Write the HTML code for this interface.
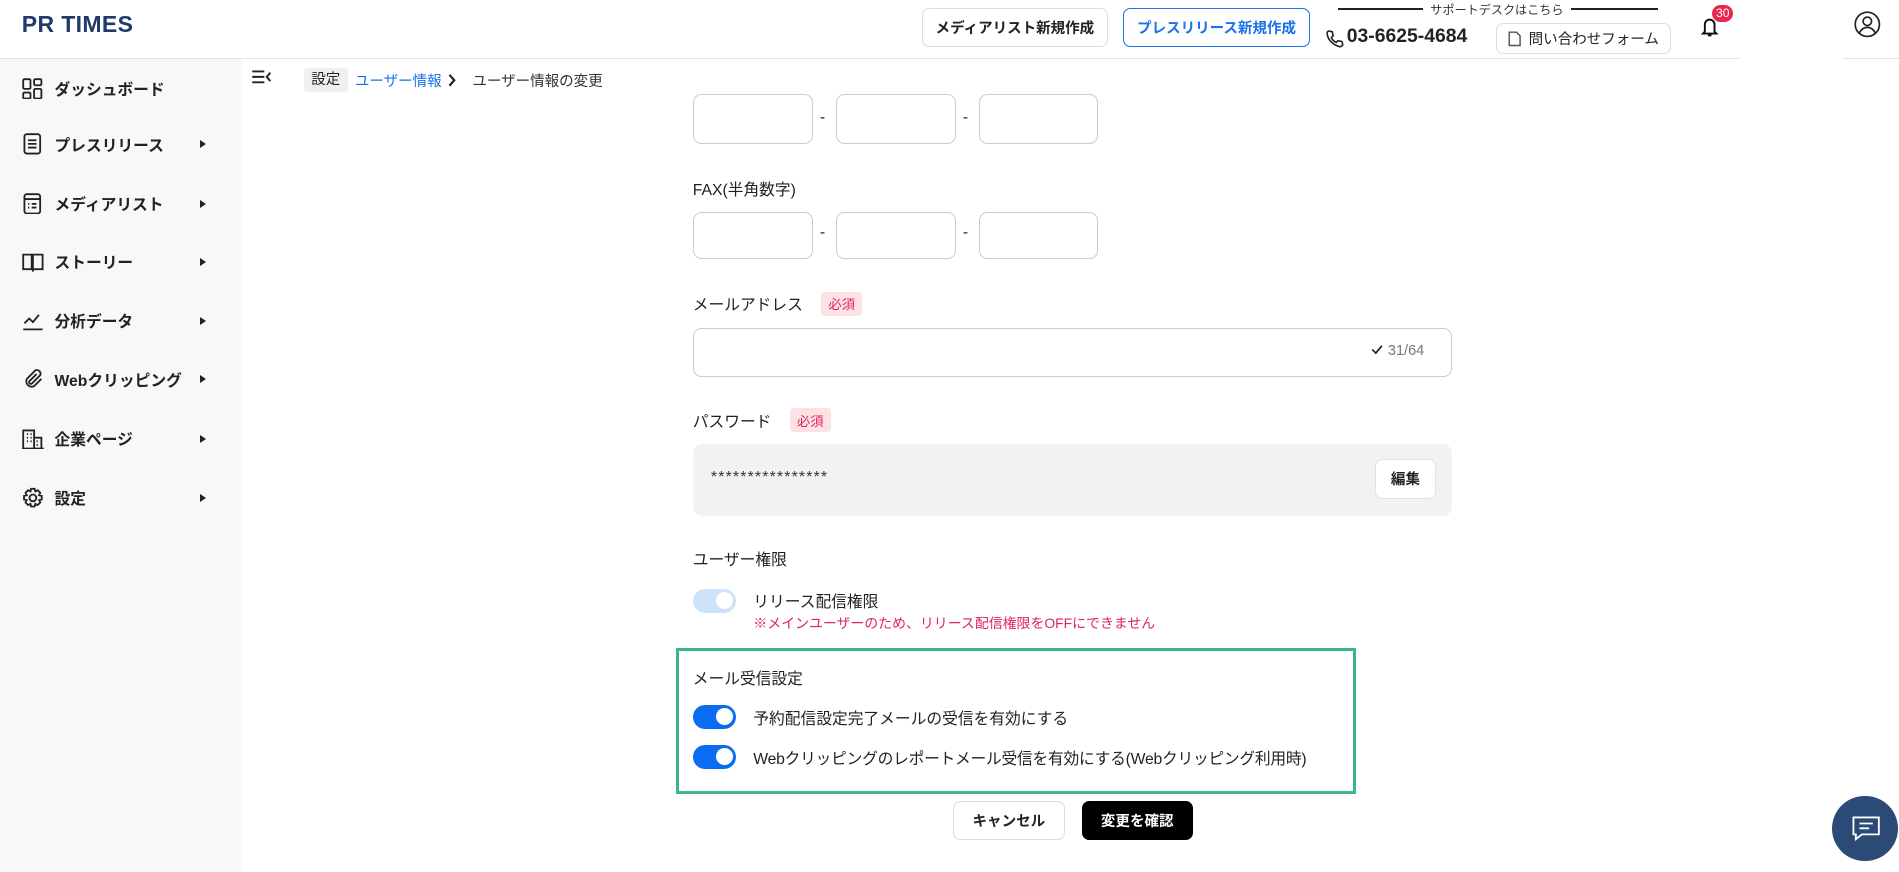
<!DOCTYPE html>
<html><head><meta charset="utf-8"><style>
html{zoom:1.21109}
*{box-sizing:border-box;margin:0;padding:0}
body{width:1568px;height:720px;overflow:hidden;background:#fff;font-family:"Liberation Sans","Noto Sans CJK JP",sans-serif;color:#222;position:relative}
.a{position:absolute}
.btn{position:absolute;border:1px solid #ddd;border-radius:6px;background:#fff;font-weight:bold;font-size:12px;display:flex;align-items:center;justify-content:center}
.nav{position:absolute;left:18px;width:160px;height:20px;display:flex;align-items:center;font-weight:bold;font-size:13px}
.nav svg{width:18px;height:18px;margin-right:9px}
.nav .ar{position:absolute;left:147px;top:7px;width:0;height:0;border-left:5px solid #222;border-top:4px solid transparent;border-bottom:4px solid transparent}
.inp{position:absolute;border:1px solid #ccc;border-radius:7px;background:#fff}
.lbl{position:absolute;font-size:13px;color:#222}
.req{position:absolute;background:#fde2e4;color:#e0245e;font-size:11px;border-radius:3px;padding:2px 6px}
.tg{position:absolute;width:36px;height:20px;border-radius:10px;background:#0a6cf0}
.tg::after{content:"";position:absolute;right:3px;top:3px;width:14px;height:14px;border-radius:50%;background:#fff}
.t{position:absolute;font-size:13px}
</style></head><body>
<!-- header -->
<div class="a" style="left:0;top:48px;width:1437px;height:1px;background:#e3e3e3"></div>
<div class="a" style="left:1522px;top:48px;width:46px;height:1px;background:#e3e3e3"></div>
<div class="a" style="left:18px;top:9px;font-size:19px;font-weight:bold;color:#1f3a6b;letter-spacing:0.3px">PR TIMES</div>
<div class="btn" style="left:761px;top:7px;width:154px;height:32px">メディアリスト新規作成</div>
<div class="btn" style="left:927px;top:7px;width:155px;height:32px;border-color:#1a73e8;color:#1a73e8">プレスリリース新規作成</div>
<div class="a" style="left:1105px;top:7px;width:70px;height:1px;background:#222"></div>
<div class="a" style="left:1181px;top:1px;font-size:10px;color:#333">サポートデスクはこちら</div>
<div class="a" style="left:1297px;top:7px;width:72px;height:1px;background:#222"></div>
<svg class="a" style="left:1094px;top:23px" width="16" height="17" viewBox="0 0 24 24"><path d="M5 3l4 1 1 5-2 2c1 3 3 5 6 6l2-2 5 1 1 4c-1 2-3 3-5 2C10 20 4 14 3 8c-1-3 0-5 2-5z" fill="none" stroke="#222" stroke-width="2"/></svg>
<div class="a" style="left:1112px;top:21px;font-size:16px;font-weight:bold">03-6625-4684</div>
<div class="btn" style="left:1235px;top:19px;width:145px;height:26px;font-weight:normal;font-size:12px;color:#222"><svg width="11" height="13" viewBox="0 0 11 13" style="margin-right:6px" fill="none" stroke="#555" stroke-width="1.2"><path d="M1 1h6l3 3v8H1z"/></svg>問い合わせフォーム</div>
<svg class="a" style="left:1404px;top:13px" width="16" height="18" viewBox="0 0 16 18"><path d="M4 13V7a4 4 0 018 0v6l1.5 1.5h-11z M6.5 16h3" fill="none" stroke="#111" stroke-width="1.6"/></svg>
<div class="a" style="left:1414px;top:4px;width:17px;height:14px;border-radius:7px;background:#e8284f;color:#fff;font-size:10px;text-align:center;line-height:14px">30</div>
<svg class="a" style="left:1531px;top:9px" width="22" height="22" viewBox="0 0 22 22"><circle cx="11" cy="11" r="10" fill="none" stroke="#222" stroke-width="1.4"/><circle cx="11" cy="8.5" r="3.5" fill="none" stroke="#222" stroke-width="1.4"/><path d="M4.5 18c1.5-3 4-4.5 6.5-4.5s5 1.5 6.5 4.5" fill="none" stroke="#222" stroke-width="1.4"/></svg>
<!-- sidebar -->
<div class="a" style="left:0;top:49px;width:200px;height:671px;background:#f8f8f8"></div>
<div class="nav" style="top:63px"><svg viewBox="0 0 18 18" fill="none" stroke="#222" stroke-width="1.5"><rect x="1" y="1" width="6" height="8" rx="1"/><rect x="10" y="1" width="6" height="5" rx="1"/><rect x="1" y="12" width="6" height="5" rx="1"/><rect x="10" y="9" width="6" height="8" rx="1"/></svg>ダッシュボード</div>
<div class="nav" style="top:109px"><svg viewBox="0 0 18 18" fill="none" stroke="#222" stroke-width="1.5"><rect x="2" y="1" width="13" height="16" rx="2"/><path d="M5 6h7M5 9h7M5 12h7"/></svg>プレスリリース<span class="ar"></span></div>
<div class="nav" style="top:158px"><svg viewBox="0 0 18 18" fill="none" stroke="#222" stroke-width="1.5"><rect x="2" y="1" width="13" height="16" rx="2"/><path d="M2 5h13M5 9h1M8 9h4M5 12h1M8 12h4"/></svg>メディアリスト<span class="ar"></span></div>
<div class="nav" style="top:206px"><svg viewBox="0 0 18 18" fill="none" stroke="#222" stroke-width="1.5"><path d="M1 3h7v12H1zM9 3h8v12H9zM9 15v2"/></svg>ストーリー<span class="ar"></span></div>
<div class="nav" style="top:255px"><svg viewBox="0 0 18 18" fill="none" stroke="#222" stroke-width="1.5"><path d="M2 11l4-4 3 3 5-6M1 16h16"/></svg>分析データ<span class="ar"></span></div>
<div class="nav" style="top:303px"><svg viewBox="0 0 18 18" fill="none" stroke="#222" stroke-width="1.5"><path d="M12 5l-6 6a1.5 1.5 0 002 2l7-7a3 3 0 00-4-4l-7 7a4.5 4.5 0 006 6l6-6"/></svg>Webクリッピング<span class="ar"></span></div>
<div class="nav" style="top:352px"><svg viewBox="0 0 18 18" fill="none" stroke="#222" stroke-width="1.5"><path d="M1 17V2h9v15M10 8h6v9M0 17h18M4 5h1M7 5h1M4 8h1M7 8h1M4 11h1M7 11h1M12 11h1M12 14h1"/></svg>企業ページ<span class="ar"></span></div>
<div class="nav" style="top:401px"><svg viewBox="0 0 18 18" fill="none" stroke="#222" stroke-width="1.5"><circle cx="9" cy="9" r="2.8"/><path d="M7.5 1.5h3l.5 2.2 2-1 2.1 2.1-1 2 2.2.5v3l-2.2.5 1 2-2.1 2.1-2-1-.5 2.2h-3l-.5-2.2-2 1-2.1-2.1 1-2-2.2-.5v-3l2.2-.5-1-2 2.1-2.1 2 1z"/></svg>設定<span class="ar"></span></div>
<!-- breadcrumb -->
<svg class="a" style="left:207px;top:57px" width="18" height="13" viewBox="0 0 18 13" fill="none" stroke="#222" stroke-width="1.6"><path d="M1 2h10M1 6.5h10M1 11h10M16 3l-3 3.5 3 3.5"/></svg>
<div class="a" style="left:251px;top:56px;width:36px;height:20px;background:#f0f0f0;border-radius:3px;font-size:12px;text-align:center;line-height:20px">設定</div>
<div class="a" style="left:293px;top:58px;font-size:12px;color:#1a73e8">ユーザー情報</div>
<svg class="a" style="left:369px;top:60px" width="8" height="12" viewBox="0 0 8 12"><path d="M2 1.5l4 4.5-4 4.5" fill="none" stroke="#222" stroke-width="1.8"/></svg>
<div class="a" style="left:390px;top:58px;font-size:12px;color:#333">ユーザー情報の変更</div>
<!-- form -->
<div class="inp" style="left:572px;top:78px;width:99px;height:41px"></div>
<div class="inp" style="left:690px;top:78px;width:99px;height:41px"></div>
<div class="inp" style="left:808px;top:78px;width:99px;height:41px"></div>
<div class="t" style="left:677px;top:90px">-</div><div class="t" style="left:795px;top:90px">-</div>
<div class="lbl" style="left:572px;top:146px">FAX(半角数字)</div>
<div class="inp" style="left:572px;top:175px;width:99px;height:39px"></div>
<div class="inp" style="left:690px;top:175px;width:99px;height:39px"></div>
<div class="inp" style="left:808px;top:175px;width:99px;height:39px"></div>
<div class="t" style="left:677px;top:185px">-</div><div class="t" style="left:795px;top:185px">-</div>
<div class="lbl" style="left:572px;top:241px">メールアドレス</div>
<div class="req" style="left:678px;top:241px">必須</div>
<div class="inp" style="left:572px;top:271px;width:627px;height:40px"></div>
<div class="a" style="left:1132px;top:283px;font-size:12px;color:#777"><svg width="10" height="9" viewBox="0 0 10 9" style="margin-right:4px"><path d="M1 4.5l3 3 5-6" fill="none" stroke="#222" stroke-width="1.4"/></svg>31/64</div>
<div class="lbl" style="left:572px;top:338px">パスワード</div>
<div class="req" style="left:652px;top:337px">必須</div>
<div class="a" style="left:572px;top:367px;width:627px;height:59px;background:#f2f2f2;border-radius:8px"></div>
<div class="a" style="left:587px;top:387px;font-size:13px;color:#333;letter-spacing:1px">****************</div>
<div class="btn" style="left:1135px;top:379px;width:51px;height:33px;border-color:#e2e2e2">編集</div>
<div class="lbl" style="left:572px;top:452px">ユーザー権限</div>
<div class="tg" style="left:572px;top:486px;background:#cde2fb"></div>
<div class="t" style="left:622px;top:486px">リリース配信権限</div>
<div class="a" style="left:622px;top:506px;font-size:11.5px;color:#e0245e">※メインユーザーのため、リリース配信権限をOFFにできません</div>
<div class="a" style="left:558px;top:535px;width:562px;height:121px;border:3px solid #3bb394"></div>
<div class="lbl" style="left:572px;top:550px">メール受信設定</div>
<div class="tg" style="left:572px;top:582px"></div>
<div class="t" style="left:622px;top:583px">予約配信設定完了メールの受信を有効にする</div>
<div class="tg" style="left:572px;top:615px"></div>
<div class="t" style="left:622px;top:616px;letter-spacing:-0.2px">Webクリッピングのレポートメール受信を有効にする(Webクリッピング利用時)</div>
<div class="btn" style="left:787px;top:661px;width:92px;height:33px">キャンセル</div>
<div class="btn" style="left:893px;top:661px;width:92px;height:33px;background:#000;color:#fff;border-color:#000">変更を確認</div>
<div class="a" style="left:1513px;top:657px;width:54px;height:54px;border-radius:50%;background:#2b4a75"></div>
<svg class="a" style="left:1528px;top:673px" width="25" height="22" viewBox="0 0 25 22" fill="none" stroke="#fff" stroke-width="1.5"><path d="M2 2h21v14H9l-5 4v-4H2z M7 7h11M7 11h8"/></svg>
</body></html>
